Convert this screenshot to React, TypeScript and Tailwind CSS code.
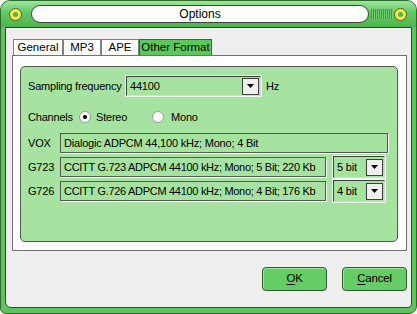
import React from 'react';

const Knob: React.FC = () => (
  <div className="w-[13px] h-[13px] shrink-0 rounded-full bg-[#f4e84a] border border-[#5a5a20] flex items-center justify-center">
    <div className="w-[5px] h-[5px] rounded-full bg-[#4cb84c]" />
  </div>
);

const Arrow: React.FC = () => (
  <div className="w-[17px] h-[17px] shrink-0 bg-[#f0f0f0] border border-[#404040] flex items-center justify-center">
    <svg width="7" height="4" viewBox="0 0 7 4">
      <path d="M0 0h7L3.5 4z" fill="#000" />
    </svg>
  </div>
);

const Field: React.FC<{ text: string; className: string }> = ({ text, className }) => (
  <div className={`h-[20px] shrink-0 border border-[#555] bg-[#a6e3a0] shadow-[1px_1px_0_0_#fff] flex items-center pl-[3px] overflow-hidden ${className}`}>
    {text}
  </div>
);

const Combo: React.FC<{ value: string; className: string }> = ({ value, className }) => (
  <div className={`shrink-0 border border-[#f4f4f4] ${className}`}>
    <div className="h-full border-t border-l border-[#404040] border-b border-r border-b-[#d8d8d8] border-r-[#d8d8d8] bg-[#a6e3a0] flex items-center justify-between pl-[3px] pr-[1px]">
      <span>{value}</span>
      <Arrow />
    </div>
  </div>
);

const Radio: React.FC<{ checked?: boolean }> = ({ checked }) => (
  <div className="w-[12px] h-[12px] shrink-0 rounded-full bg-white border border-[#9a9a9a] flex items-center justify-center">
    {checked && <div className="w-[4px] h-[4px] rounded-full bg-black" />}
  </div>
);

const Tab: React.FC<{ label: string; width: string; active?: boolean }> = ({ label, width, active }) => (
  <div
    className={`h-[16px] shrink-0 ${width} flex items-center justify-center border border-b-0 ${
      active ? 'bg-[#5cc85c] border-[#2f6f2f]' : 'bg-white border-[#808080]'
    }`}
  >
    {label}
  </div>
);

const Button: React.FC<{ first: string; rest: string }> = ({ first, rest }) => (
  <div className="w-[65px] h-[24px] rounded-[4px] bg-[#66cc66] border border-[#2f5f2f] shadow-[inset_1px_1px_0_0_#9be89b] flex items-center justify-center text-[11.5px]">
    <span className="underline underline-offset-2">{first}</span>
    <span>{rest}</span>
  </div>
);

export default function App() {
  return (
    <div className="w-[417px] h-[314px] font-['Liberation_Sans',Arial,sans-serif] text-[11px] tracking-[-0.2px] leading-none text-black bg-white whitespace-nowrap">
      <div className="w-full h-full flex flex-col bg-[#5fc45f] border border-[#2e6a2e] rounded-t-[10px] rounded-br-[8px] rounded-bl-[6px]">
        {/* Title bar */}
        <div className="h-[26px] shrink-0 flex items-center pl-[8px] pr-[10px] bg-[linear-gradient(#9ee69e,#62c862_45%,#4fb44f)] rounded-t-[9px]">
          <Knob />
          <div className="ml-[9px] w-[338px] h-[18px] shrink-0 rounded-full bg-white border border-[#404040] flex items-center justify-center text-[12px] tracking-normal">
            Options
          </div>
          <div className="ml-[2px] w-[22px] h-[10px] shrink-0 bg-[repeating-linear-gradient(90deg,#3f9a3f_0_1px,#70cc70_1px_2px)]" />
          <div className="ml-[1px]">
            <Knob />
          </div>
        </div>

        {/* Body */}
        <div className="flex-1 mx-[4px] mb-[5px] bg-[#efefef] border border-[#404040] rounded-bl-[6px] rounded-br-[4px] flex flex-col pl-[6px] pr-[4px] pt-[11px]">
          <div className="flex ml-[1px] text-[11.5px] tracking-normal">
            <Tab label="General" width="w-[50px]" />
            <Tab label="MP3" width="w-[38px]" />
            <Tab label="APE" width="w-[38px]" />
            <Tab label="Other Format" width="w-[73px]" active />
          </div>
          <div className="h-[196px] shrink-0 bg-white border border-[#707070] pl-[7px] pr-[8px] pt-[10px]">
            <div className="h-[176px] rounded-[5px] bg-[#a6e3a0] border border-[#555] flex flex-col pl-[7px] pr-[9px] pt-[8px]">
              <div className="flex items-center h-[22px]">
                <span className="w-[97px] shrink-0">Sampling frequency</span>
                <Combo value="44100" className="w-[137px] h-[22px]" />
                <span className="ml-[4px]">Hz</span>
              </div>
              <div className="flex items-center h-[20px] mt-[10px]">
                <span className="w-[51px] shrink-0">Channels</span>
                <Radio checked />
                <span className="ml-[5px] w-[56px] shrink-0">Stereo</span>
                <Radio />
                <span className="ml-[7px]">Mono</span>
              </div>
              <div className="flex items-center mt-[6px]">
                <span className="w-[32px] shrink-0">VOX</span>
                <Field text="Dialogic ADPCM 44,100 kHz; Mono; 4 Bit" className="flex-1" />
              </div>
              <div className="flex items-center mt-[2px]">
                <span className="w-[32px] shrink-0">G723</span>
                <Field text="CCITT G.723 ADPCM 44100 kHz; Mono; 5 Bit; 220 Kb" className="w-[266px] tracking-[-0.3px]" />
                <Combo value="5 bit" className="ml-[6px] w-[54px] h-[24px]" />
              </div>
              <div className="flex items-center">
                <span className="w-[32px] shrink-0">G726</span>
                <Field text="CCITT G.726 ADPCM 44100 kHz; Mono; 4 Bit; 176 Kb" className="w-[266px] tracking-[-0.3px]" />
                <Combo value="4 bit" className="ml-[6px] w-[54px] h-[24px]" />
              </div>
            </div>
          </div>
          <div className="flex justify-end gap-[15px] mt-[16px]">
            <Button first="O" rest="K" />
            <Button first="C" rest="ancel" />
          </div>
        </div>
      </div>
    </div>
  );
}
